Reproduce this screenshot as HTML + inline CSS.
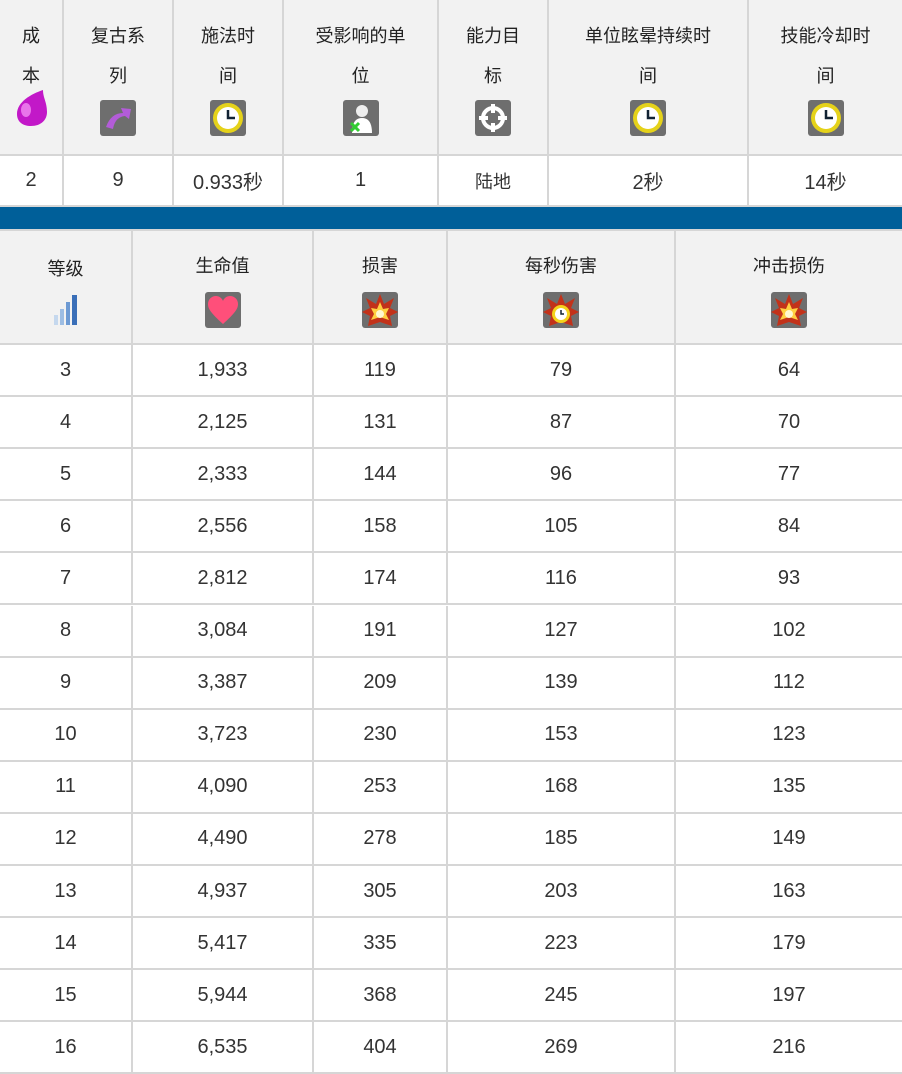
<!DOCTYPE html>
<html><head><meta charset="utf-8"><style>
*{margin:0;padding:0;box-sizing:border-box}
body{width:902px;height:1073px;overflow:hidden;background:#fff;font-family:"Liberation Sans","Noto Sans CJK SC",sans-serif;color:#333;position:relative}
.c{position:absolute;display:flex;flex-direction:column;align-items:center;justify-content:center;text-align:center;border-right:2px solid #d6d6d6;border-bottom:2px solid #d6d6d6}
.h{background:#f2f2f2;font-size:18px;color:#222;line-height:40px}
.h span{display:block;white-space:nowrap}
.d{font-size:20px}
.ic{width:36px;height:36px;border-radius:3px;background:#6e6e6e;margin-top:6px;display:flex;align-items:center;justify-content:center}
.t{justify-content:flex-start;padding-top:16px}
</style></head><body>
<div class="c h t" style="left:0;top:0;width:64px;height:156px"><span>成<br>本</span>
<svg width="40" height="40" viewBox="0 0 40 40" style="margin-top:-8px"><path d="M32 2 C20 6 6 14 6 26 C6 34 12 38 20 38 C30 38 36 32 36 24 C36 14 32 10 32 2Z" fill="#c218c8"/><ellipse cx="15" cy="22" rx="5" ry="7" fill="#e874ea"/></svg></div>
<div class="c h t" style="left:64px;top:0;width:110px;height:156px"><span>复古系<br>列</span><div class="ic" style="margin-top:4px"><svg width="30" height="30" viewBox="0 0 30 30"><path d="M3 24 Q8 10 20 10 L18 5 L28 6 L26 16 L22 13 Q12 14 10 26Z" fill="#b35cd8"/></svg></div></div>
<div class="c h t" style="left:174px;top:0;width:110px;height:156px"><span>施法时<br>间</span><div class="ic" style="margin-top:4px"><svg width="34" height="34" viewBox="0 0 34 34"><circle cx="17" cy="17" r="15" fill="#e5d21a"/><circle cx="17" cy="17" r="11" fill="#fff"/><path d="M17 9V17H24" stroke="#123" stroke-width="2.5" fill="none"/></svg></div></div>
<div class="c h t" style="left:284px;top:0;width:155px;height:156px"><span>受影响的单<br>位</span><div class="ic" style="margin-top:4px"><svg width="30" height="30" viewBox="0 0 30 30"><circle cx="16" cy="8" r="6" fill="#eee"/><path d="M6 30 Q6 15 16 15 Q26 15 26 30Z" fill="#fff"/><path d="M5 20l8 8M13 20l-8 8" stroke="#3c3" stroke-width="3"/></svg></div></div>
<div class="c h t" style="left:439px;top:0;width:110px;height:156px"><span>能力目<br>标</span><div class="ic" style="margin-top:4px"><svg width="30" height="30" viewBox="0 0 30 30"><circle cx="15" cy="15" r="10" stroke="#fff" stroke-width="4" fill="none"/><path d="M15 1v9M15 20v9M1 15h9M20 15h9" stroke="#fff" stroke-width="4"/></svg></div></div>
<div class="c h t" style="left:549px;top:0;width:200px;height:156px"><span>单位眩晕持续时<br>间</span><div class="ic" style="margin-top:4px"><svg width="34" height="34" viewBox="0 0 34 34"><circle cx="17" cy="17" r="15" fill="#e5d21a"/><circle cx="17" cy="17" r="11" fill="#fff"/><path d="M17 9V17H24" stroke="#123" stroke-width="2.5" fill="none"/></svg></div></div>
<div class="c h t" style="left:749px;top:0;width:153px;height:156px;border-right:none"><span>技能冷却时<br>间</span><div class="ic" style="margin-top:4px"><svg width="34" height="34" viewBox="0 0 34 34"><circle cx="17" cy="17" r="15" fill="#e5d21a"/><circle cx="17" cy="17" r="11" fill="#fff"/><path d="M17 9V17H24" stroke="#123" stroke-width="2.5" fill="none"/></svg></div></div>
<div class="c d" style="left:0;top:156px;width:64px;height:51px">2</div>
<div class="c d" style="left:64px;top:156px;width:110px;height:51px">9</div>
<div class="c d" style="left:174px;top:156px;width:110px;height:51px">0.933秒</div>
<div class="c d" style="left:284px;top:156px;width:155px;height:51px">1</div>
<div class="c d" style="left:439px;top:156px;width:110px;height:51px;font-size:18px">陆地</div>
<div class="c d" style="left:549px;top:156px;width:200px;height:51px">2秒</div>
<div class="c d" style="left:749px;top:156px;width:153px;height:51px;border-right:none">14秒</div>
<div style="position:absolute;left:0;top:207px;width:902px;height:22px;background:#005f99"></div>
<div style="position:absolute;left:0;top:229px;width:902px;height:2px;background:#d6d6d6"></div>
<div class="c h" style="left:0;top:231px;width:133px;height:114px"><span>等级</span><svg width="30" height="32" viewBox="0 0 30 32" style="margin-top:4px"><rect x="3" y="22" width="4" height="10" fill="#c5d8ee"/><rect x="9" y="16" width="4" height="16" fill="#9dbde3"/><rect x="15" y="9" width="4" height="23" fill="#6d9ad3"/><rect x="21" y="2" width="5" height="30" fill="#3a6fb8"/></svg></div>
<div class="c h" style="left:133px;top:231px;width:181px;height:114px"><span>生命值</span><div class="ic"><svg width="32" height="30" viewBox="0 0 32 30"><path d="M16 29 C4 18 1 14 1 9 C1 4 5 1 9 1 C12 1 15 3 16 6 C17 3 20 1 23 1 C27 1 31 4 31 9 C31 14 28 18 16 29Z" fill="#ff4f7a"/></svg></div></div>
<div class="c h" style="left:314px;top:231px;width:134px;height:114px"><span>损害</span><div class="ic"><svg width="36" height="36" viewBox="0 0 36 36"><path d="M18 2 L22 12 L32 6 L28 16 L36 20 L28 24 L30 34 L18 30 L6 34 L8 24 L0 20 L8 16 L4 6 L14 12Z" fill="#c2321a"/><path d="M18 10 L21 17 L27 16 L24 22 L27 28 L18 25 L9 28 L12 22 L9 16 L15 17Z" fill="#ffd040"/><circle cx="18" cy="22" r="4" fill="#fff8d0"/></svg></div></div>
<div class="c h" style="left:448px;top:231px;width:228px;height:114px"><span>每秒伤害</span><div class="ic"><svg width="36" height="36" viewBox="0 0 36 36"><path d="M18 2 L22 12 L32 6 L28 16 L36 20 L28 24 L30 34 L18 30 L6 34 L8 24 L0 20 L8 16 L4 6 L14 12Z" fill="#c2321a"/><circle cx="18" cy="22" r="9" fill="#f4d21a"/><circle cx="18" cy="22" r="6" fill="#fff"/><path d="M18 18v4h3" stroke="#123" stroke-width="1.5" fill="none"/></svg></div></div>
<div class="c h" style="left:676px;top:231px;width:226px;height:114px;border-right:none"><span>冲击损伤</span><div class="ic"><svg width="36" height="36" viewBox="0 0 36 36"><path d="M18 2 L22 12 L32 6 L28 16 L36 20 L28 24 L30 34 L18 30 L6 34 L8 24 L0 20 L8 16 L4 6 L14 12Z" fill="#c2321a"/><path d="M18 10 L21 17 L27 16 L24 22 L27 28 L18 25 L9 28 L12 22 L9 16 L15 17Z" fill="#ffd040"/><circle cx="18" cy="22" r="4" fill="#fff8d0"/></svg></div></div>
<div id="rows"></div>
<script>
var d=[[3,"1,933",119,79,64],[4,"2,125",131,87,70],[5,"2,333",144,96,77],[6,"2,556",158,105,84],[7,"2,812",174,116,93],[8,"3,084",191,127,102],[9,"3,387",209,139,112],[10,"3,723",230,153,123],[11,"4,090",253,168,135],[12,"4,490",278,185,149],[13,"4,937",305,203,163],[14,"5,417",335,223,179],[15,"5,944",368,245,197],[16,"6,535",404,269,216]];
var xs=[0,133,314,448,676,902],h="";
d.forEach(function(r,i){var t=345+i*52.1;for(var j=0;j<5;j++){h+='<div class="c d" style="left:'+xs[j]+'px;top:'+t+'px;width:'+(xs[j+1]-xs[j])+'px;height:52px;'+(j==4?'border-right:none':'')+'">'+r[j]+'</div>';}});
document.getElementById("rows").innerHTML=h;
</script>
</body></html>
